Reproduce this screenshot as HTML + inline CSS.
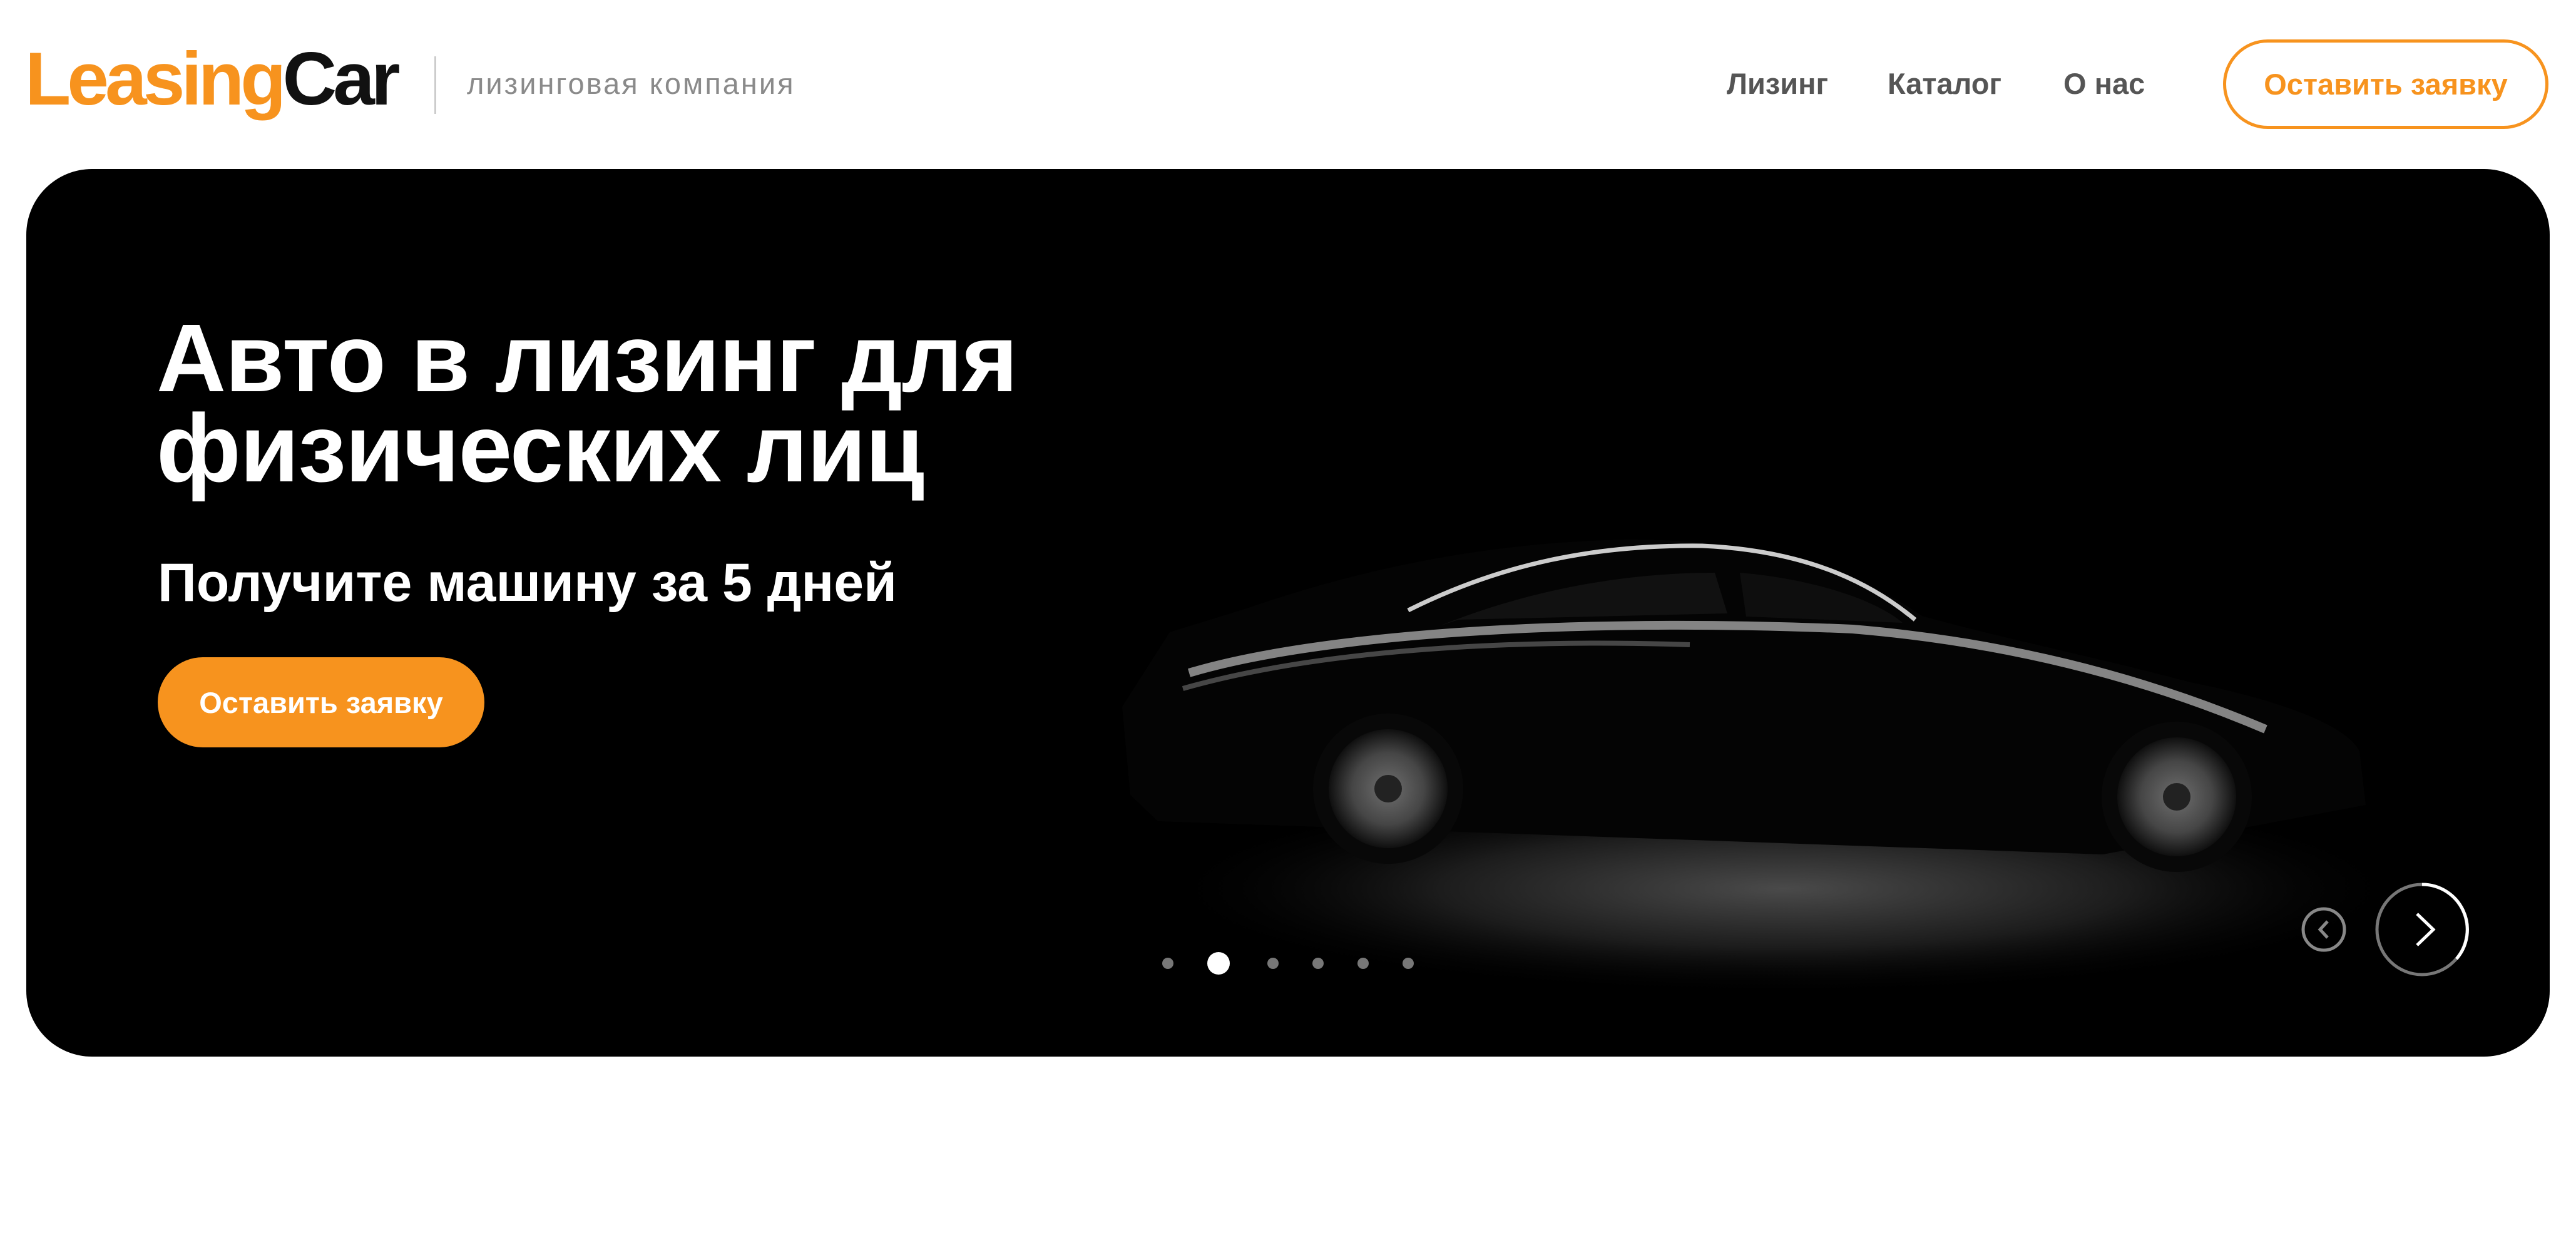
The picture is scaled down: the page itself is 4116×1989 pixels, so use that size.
<!DOCTYPE html>
<html><head><meta charset="utf-8"><style>
*{margin:0;padding:0;box-sizing:border-box}
html,body{width:4116px;height:1989px;background:#fff;overflow:hidden;font-family:"Liberation Sans","DejaVu Sans",sans-serif}
.abs{position:absolute;white-space:nowrap}
.logo{left:40px;top:66px;font-size:120px;font-weight:bold;letter-spacing:-6px;line-height:1}
.div{left:694px;top:90px;width:3px;height:92px;background:#ccc}
.sub{left:746px;top:106px;font-size:47px;color:#8a8a8a;letter-spacing:3px}
.nav{top:106px;font-size:47px;font-weight:bold;color:#555}
.btn1{left:3552px;top:63px;width:520px;height:143px;border:5px solid #f7931e;border-radius:72px;color:#f7931e;font-size:47px;font-weight:bold;display:flex;align-items:center;justify-content:center}
.hero{left:42px;top:270px;width:4032px;height:1418px;background:#000;border-radius:105px;overflow:hidden}
.h1{left:250px;top:500px;font-size:154px;font-weight:bold;color:#fff;line-height:144px;letter-spacing:-1.5px}
.h2{left:252px;top:882px;font-size:86px;font-weight:bold;color:#fff}
.btn2{left:252px;top:1050px;width:522px;height:144px;background:#f7931e;border-radius:72px;color:#fff;font-size:47px;font-weight:bold;display:flex;align-items:center;justify-content:center}
</style></head><body>
<div class="abs logo"><span style="color:#f7931e">Leasing</span><span style="color:#111">Car</span></div>
<div class="abs div"></div>
<div class="abs sub">лизинговая компания</div>
<div class="abs nav" style="left:2759px">Лизинг</div>
<div class="abs nav" style="left:3016px">Каталог</div>
<div class="abs nav" style="left:3297px">О нас</div>
<div class="abs btn1">Оставить заявку</div>
<div class="abs hero">
<svg width="4032" height="1418" viewBox="42 270 4032 1418" style="position:absolute;left:0;top:0">
<defs>
<radialGradient id="g" cx="0.5" cy="0.5" r="0.5"><stop offset="0" stop-color="#4a4a4a"/><stop offset="0.55" stop-color="#1c1c1c"/><stop offset="1" stop-color="#000" stop-opacity="0"/></radialGradient>
<radialGradient id="w" cx="0.5" cy="0.5" r="0.5"><stop offset="0" stop-color="#888"/><stop offset="0.6" stop-color="#555"/><stop offset="1" stop-color="#111"/></radialGradient>
</defs>
<ellipse cx="2850" cy="1420" rx="1000" ry="170" fill="url(#g)"/>
<path d="M1793 1129 L1869 1010 L1995 971 C2200 900 2400 866 2600 862 C2800 862 2950 900 3071 984 C3200 1020 3350 1050 3500 1090 C3650 1120 3750 1160 3770 1200 L3780 1286 L3360 1365 L1850 1312 L1806 1270 Z" fill="#040404"/>
<path d="M1900 1075 C2100 1015 2500 985 2960 1005 C3200 1025 3420 1080 3620 1165" stroke="#bbb" stroke-width="14" fill="none" opacity="0.7"/>
<path d="M1890 1100 C2100 1040 2400 1020 2700 1030" stroke="#888" stroke-width="8" fill="none" opacity="0.5"/>
<path d="M2250 975 C2400 900 2550 870 2720 872 C2900 880 3000 940 3060 990" stroke="#ccc" stroke-width="7" fill="none"/>
<path d="M2300 1000 C2450 940 2600 915 2740 915 L2760 980 L2330 990 Z" fill="#111"/>
<path d="M2780 915 C2900 925 3000 960 3040 995 L2790 985 Z" fill="#0e0e0e"/>
<circle cx="2218" cy="1260" r="120" fill="#080808"/>
<circle cx="2218" cy="1260" r="95" fill="url(#w)" opacity="0.8"/>
<circle cx="2218" cy="1260" r="22" fill="#222"/>
<circle cx="3478" cy="1273" r="120" fill="#080808"/>
<circle cx="3478" cy="1273" r="95" fill="url(#w)" opacity="0.8"/>
<circle cx="3478" cy="1273" r="22" fill="#222"/>
<circle cx="1866" cy="1539" r="9" fill="#777"/>
<circle cx="1947" cy="1539" r="18" fill="#fff"/>
<circle cx="2034" cy="1539" r="9" fill="#777"/>
<circle cx="2106" cy="1539" r="9" fill="#777"/>
<circle cx="2178" cy="1539" r="9" fill="#777"/>
<circle cx="2250" cy="1539" r="9" fill="#777"/>
<circle cx="3713" cy="1485" r="33" stroke="#888" stroke-width="5" fill="none"/>
<path d="M3719 1472 L3707 1485 L3719 1498" stroke="#888" stroke-width="5" fill="none"/>
<circle cx="3870" cy="1485" r="72" stroke="#777" stroke-width="5" fill="none"/>
<path d="M3870 1413 A72 72 0 0 1 3925 1532" stroke="#fff" stroke-width="5" fill="none"/>
<path d="M3862 1460 L3888 1485 L3862 1510" stroke="#fff" stroke-width="5" fill="none"/>
</svg>
</div>
<div class="abs h1">Авто в лизинг для<br>физических лиц</div>
<div class="abs h2">Получите машину за 5 дней</div>
<div class="abs btn2">Оставить заявку</div>
</body></html>
